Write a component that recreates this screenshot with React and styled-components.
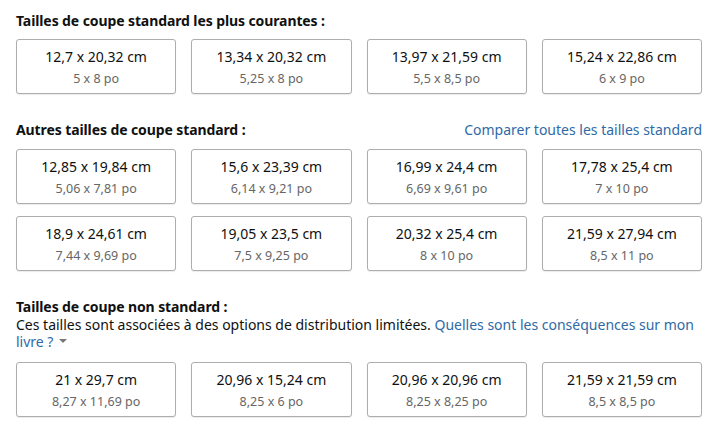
import React from "react";
import styled, { createGlobalStyle } from "styled-components";

const GlobalStyle = createGlobalStyle`
  body {
    margin: 0;
    background: #ffffff;
    font-family: "Noto Sans", "Liberation Sans", sans-serif;
    color: #0f1111;
  }
`;

const Page = styled.div`
  width: 718px;
  box-sizing: border-box;
  padding: 12px 16px 0 16px;
`;

const Section = styled.section`
  margin-bottom: 27px;
`;

const HeadRow = styled.div`
  display: flex;
  justify-content: space-between;
  align-items: baseline;
  margin-bottom: ${(p) => p.$gap || 11}px;
`;

const Heading = styled.h3`
  margin: 0;
  font-size: 14px;
  line-height: 17px;
  font-weight: 700;
  letter-spacing: -0.1px;
`;

const Link = styled.a`
  color: #2f6aa6;
  font-size: 14px;
  line-height: 17px;
  text-decoration: none;
  cursor: pointer;
`;

const Note = styled.p`
  margin: 1px 0 12px 0;
  font-size: 14px;
  line-height: 17px;
`;

const Caret = styled.span`
  display: inline-block;
  margin-left: 6px;
  vertical-align: middle;
  width: 0;
  height: 0;
  border-left: 4px solid transparent;
  border-right: 4px solid transparent;
  border-top: 4px solid #777;
  position: relative;
  top: -2px;
`;

const Grid = styled.div`
  display: grid;
  grid-template-columns: repeat(4, 1fr);
  column-gap: 15px;
  row-gap: 12px;
`;

const Card = styled.button`
  height: 55px;
  box-sizing: border-box;
  border: 1px solid #adadad;
  border-radius: 3px;
  background: #fff;
  box-shadow: 0 1px 1px rgba(0, 0, 0, 0.08);
  padding: 7px 4px 0 4px;
  display: flex;
  flex-direction: column;
  align-items: center;
  font-family: inherit;
  cursor: pointer;
`;

const Main = styled.span`
  font-size: 14px;
  line-height: 20px;
  color: #0f1111;
`;

const Sub = styled.span`
  margin-top: 2px;
  font-size: 12.5px;
  line-height: 20px;
  color: #666;
`;

const common = [
  ["12,7 x 20,32 cm", "5 x 8 po"],
  ["13,34 x 20,32 cm", "5,25 x 8 po"],
  ["13,97 x 21,59 cm", "5,5 x 8,5 po"],
  ["15,24 x 22,86 cm", "6 x 9 po"],
];

const others = [
  ["12,85 x 19,84 cm", "5,06 x 7,81 po"],
  ["15,6 x 23,39 cm", "6,14 x 9,21 po"],
  ["16,99 x 24,4 cm", "6,69 x 9,61 po"],
  ["17,78 x 25,4 cm", "7 x 10 po"],
  ["18,9 x 24,61 cm", "7,44 x 9,69 po"],
  ["19,05 x 23,5 cm", "7,5 x 9,25 po"],
  ["20,32 x 25,4 cm", "8 x 10 po"],
  ["21,59 x 27,94 cm", "8,5 x 11 po"],
];

const nonStandard = [
  ["21 x 29,7 cm", "8,27 x 11,69 po"],
  ["20,96 x 15,24 cm", "8,25 x 6 po"],
  ["20,96 x 20,96 cm", "8,25 x 8,25 po"],
  ["21,59 x 21,59 cm", "8,5 x 8,5 po"],
];

const SizeGrid = ({ items }) => (
  <Grid>
    {items.map(([cm, po]) => (
      <Card key={cm}>
        <Main>{cm}</Main>
        <Sub>{po}</Sub>
      </Card>
    ))}
  </Grid>
);

const App = () => {
  return (
    <>
      <GlobalStyle />
      <Page>
        <Section>
          <HeadRow $gap={10}>
            <Heading>Tailles de coupe standard les plus courantes :</Heading>
          </HeadRow>
          <SizeGrid items={common} />
        </Section>

        <Section>
          <HeadRow>
            <Heading>Autres tailles de coupe standard :</Heading>
            <Link>Comparer toutes les tailles standard</Link>
          </HeadRow>
          <SizeGrid items={others} />
        </Section>

        <Section>
          <Heading>Tailles de coupe non standard :</Heading>
          <Note>
            Ces tailles sont associées à des options de distribution limitées.{" "}
            <Link>
              Quelles sont les conséquences sur mon livre ?
            </Link>
            <Caret />
          </Note>
          <SizeGrid items={nonStandard} />
        </Section>
      </Page>
    </>
  );
};

export default App;
